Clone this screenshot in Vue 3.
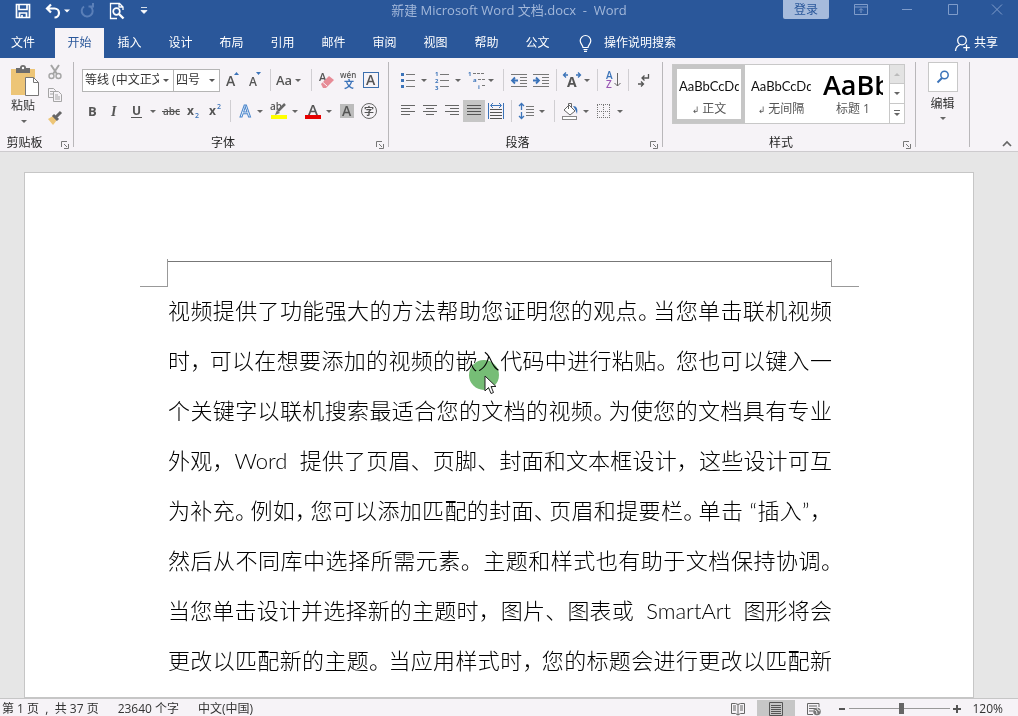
<script setup>
import { ref } from 'vue'

const tabs = ['插入', '设计', '布局', '引用', '邮件', '审阅', '视图', '帮助', '公文']
const zoom = ref(52)

// gap: room left after a punctuation mark (full, mid, slim)
const lines = [
  { gap: 'slim', text: '视频提供了功能强大的方法帮助您证明您的观点。当您单击联机视频' },
  { gap: 'mid', text: '时，可以在想要添加的视频的嵌入代码中进行粘贴。您也可以键入一' },
  { gap: 'slim', text: '个关键字以联机搜索最适合您的文档的视频。为使您的文档具有专业' },
  { gap: 'full', text: '外观，Word\u00a0 提供了页眉、页脚、封面和文本框设计，这些设计可互' },
  { gap: 'slim', end: 'full', text: '为补充。例如，您可以添加匹配的封面、页眉和提要栏。单击 “插入”，' },
  { gap: 'full', end: 'half', text: '然后从不同库中选择所需元素。主题和样式也有助于文档保持协调。' },
  { gap: 'full', text: '当您单击设计并选择新的主题时，图片、图表或\u00a0 SmartArt\u00a0 图形将会' },
  { gap: 'mid', text: '更改以匹配新的主题。当应用样式时，您的标题会进行更改以匹配新' },
].map((l) => ({ ...l, parts: l.text.split(/([。，、])/).filter(Boolean) }))

const isMark = (s) => '。，、'.includes(s)
</script>

<template>
  <div class="app">
    <header class="titlebar">
      <div class="quick">
        <button class="q save" aria-label="保存"><svg width="16" height="16"><path d="M1.500 1.500h13v13h-13z M4 1.500v5h8v-5 M4.500 14.500v-4.500h7v4.500 M7 12v2" fill="none" stroke="#fff" stroke-width="1.700" /></svg></button>
        <button class="q undo" aria-label="撤消"><svg width="26" height="16"><path d="M6 1.500L2 5.500l4 4M2.500 5.500h7a4 4 0 0 1 0 9" fill="none" stroke="#fff" stroke-width="2.200" /><path d="M19 6.500h6l-3 3z" fill="#fff" /></svg></button>
        <button class="q redo" aria-label="重复"><svg width="16" height="16"><path d="M4 3.500a5.500 5.500 0 1 0 7 .5M8.500 3.500h4.500V0" fill="none" stroke="#5a7fb8" stroke-width="2" /></svg></button>
        <button class="q" aria-label="打印预览"><svg width="16" height="18"><path d="M14 8V5l-3.500-3.500H1.500v15H8M10 1.500V5h4" fill="none" stroke="#fff" stroke-width="1.300" /><circle cx="7.500" cy="9.500" r="3.300" fill="none" stroke="#fff" stroke-width="1.700" /><path d="M10 12l4.500 4.500" stroke="#fff" stroke-width="2.400" /></svg></button>
        <button class="q more" aria-label="自定义快速访问工具栏"><svg width="8" height="8"><path d="M1 .5h6M1 3.500h6L4 6.500z" fill="#fff" stroke="#fff" stroke-width=".8" /></svg></button>
      </div>
      <div class="doc-title">新建 Microsoft Word 文档.docx&nbsp; -&nbsp; Word</div>
      <div class="window">
        <button class="login">登录</button>
        <button class="w" aria-label="功能区显示选项"><svg width="14" height="11"><path d="M.5.5h13v10H.5zM.5 3h13M7 9V5M5 6.500L7 4.500l2 2" fill="none" stroke="#7f9cca" /></svg></button>
        <button class="w" aria-label="最小化"><svg width="12" height="11"><path d="M1 5.500h10" stroke="#7f9cca" /></svg></button>
        <button class="w" aria-label="最大化"><svg width="12" height="11"><path d="M1.500.5h9v10h-9z" fill="none" stroke="#7f9cca" /></svg></button>
        <button class="w" aria-label="关闭"><svg width="12" height="11"><path d="M1 .5l10 10M11 .5l-10 10" stroke="#7f9cca" /></svg></button>
      </div>
    </header>

    <nav class="tabs">
      <button class="tab file">文件</button>
      <button class="tab active">开始</button>
      <button v-for="t in tabs" :key="t" class="tab">{{ t }}</button>
      <button class="tell">
        <svg width="13" height="17"><path d="M4 12.500c0-2.500-2.800-3.500-2.800-6.700a5.300 5.300 0 0 1 10.600 0c0 3.200-2.800 4.200-2.800 6.700zM4.500 14.500h4M5 16.300h3" fill="none" stroke="#fff" stroke-width="1.200" /></svg>
        操作说明搜索
      </button>
      <button class="share">
        <svg width="16" height="17"><circle cx="8" cy="5.500" r="4.300" fill="none" stroke="#fff" stroke-width="1.300" /><path d="M1.500 16c.3-3.500 2-5.500 5-6.500M12.500 9.500v6.500M9.300 12.700h6.500" fill="none" stroke="#fff" stroke-width="1.300" /></svg>
        共享
      </button>
    </nav>

    <section class="ribbon">
      <div class="group clip">
        <div class="clip-tools">
          <button class="paste">
            <svg width="30" height="32"><rect x="1" y="4" width="24" height="26" fill="#edc577" /><path d="M6 3h4a3 3 0 0 1 6 0h4v5H6z" fill="#6d6d6d" /><circle cx="13" cy="3" r="1.200" fill="#fff" /><path d="M15.500 12.500h8l5 5v13h-13z" fill="#fff" stroke="#777" /><path d="M23.500 12.500v5h5" fill="none" stroke="#777" /></svg>
            <span>粘贴</span>
            <svg width="8" height="5"><path d="M1 1h6L4 4z" fill="#666" /></svg>
          </button>
          <div class="clip-small">
            <button aria-label="剪切"><svg width="16" height="16"><path d="M4 1l6 9M12 1L6 10" stroke="#a5a5a5" stroke-width="2" /><circle cx="4.500" cy="12" r="2.500" fill="none" stroke="#a5a5a5" stroke-width="1.400" /><circle cx="11.500" cy="12" r="2.500" fill="none" stroke="#a5a5a5" stroke-width="1.400" /></svg></button>
            <button aria-label="复制"><svg width="16" height="16"><path d="M1.500 1.500h5l2 2v7h-7zM3 4.500h4M3 7h4" fill="none" stroke="#a5a5a5" /><path d="M6.500 4.500h5l3 3v7h-8z" fill="#f6f3f7" stroke="#a5a5a5" /><path d="M8 8h3M8 10h5M8 12h5" stroke="#a5a5a5" /></svg></button>
            <button aria-label="格式刷"><svg width="16" height="16"><path d="M1 9l5-3 4 4-4 5z" fill="#edc577" /><path d="M6 5l5 5M9 7l5-5" stroke="#666" stroke-width="3" /></svg></button>
          </div>
        </div>
        <footer>剪贴板<button class="launch" aria-label="剪贴板设置"><svg width="8" height="8"><path d="M.5 6V.5H6M3 3l3 3M7.500 3v4.500H3" fill="none" stroke="#777" /></svg></button></footer>
      </div>

      <div class="group font">
        <div class="row">
          <div class="combo name"><select aria-label="字体"><option>等线 (中文正文)</option></select><svg width="8" height="5"><path d="M1 1h6L4 4z" fill="#555" /></svg></div>
          <div class="combo size"><select aria-label="字号"><option>四号</option></select><svg width="8" height="5"><path d="M1 1h6L4 4z" fill="#555" /></svg></div>
          <button class="b24" aria-label="增大字号"><svg width="24" height="22"><text x="6" y="17" class="g" font-size="14">A</text><path d="M14 6h5l-2.500-3z" fill="#3b73b9" /></svg></button>
          <button class="b22" aria-label="减小字号"><svg width="22" height="22"><text x="5" y="17" class="g" font-size="12">A</text><path d="M12 3h5l-2.500 3z" fill="#3b73b9" /></svg></button>
          <i class="sep"></i>
          <button class="b32" aria-label="更改大小写"><svg width="32" height="22"><text x="1" y="16" class="g" font-size="13">Aa</text><path d="M20 10h6l-3 3z" fill="#666" /></svg></button>
          <i class="sep"></i>
          <button class="b22" aria-label="清除所有格式"><svg width="22" height="22"><text x="3" y="12" class="g" font-size="11">A</text><path d="M5 15l8-8 5 4-8 8h-3z" fill="#e78b96" /><path d="M6.500 13l4.500 4" stroke="#f6f3f7" /></svg></button>
          <button class="b22" aria-label="拼音指南"><svg width="22" height="22"><text x="2" y="9" class="pin">wén</text><text x="6" y="19" class="cj blue" font-size="10">文</text></svg></button>
          <button class="b22" aria-label="字符边框"><svg width="22" height="22"><rect x="3.500" y="3.500" width="15" height="15" fill="none" stroke="#3b6fae" /><text x="6" y="16" class="g" font-size="14">A</text></svg></button>
        </div>
        <div class="row second">
          <button class="b22" aria-label="加粗"><svg width="22" height="22"><text x="7" y="16" class="g bold" font-size="13">B</text></svg></button>
          <button class="b22" aria-label="倾斜"><svg width="22" height="22"><text x="8" y="16" class="ital" font-size="14">I</text></svg></button>
          <button class="b35" aria-label="下划线"><svg width="35" height="22"><text x="7" y="15" class="g bold" font-size="12">U</text><path d="M6 17.500h11" stroke="#555" /><path d="M25 10h6l-3 3z" fill="#666" /></svg></button>
          <button class="b22" aria-label="删除线"><svg width="22" height="22"><text x="3" y="15" class="g" font-size="10">abc</text><path d="M2 11.500h18" stroke="#555" /></svg></button>
          <button class="b22" aria-label="下标"><svg width="22" height="22"><text x="5" y="15" class="g bold" font-size="12">x</text><text x="13" y="18" class="g blue" font-size="7">2</text></svg></button>
          <button class="b22" aria-label="上标"><svg width="22" height="22"><text x="5" y="15" class="g bold" font-size="12">x</text><text x="13" y="9" class="g blue" font-size="7">2</text></svg></button>
          <i class="sep"></i>
          <button class="b31" aria-label="文本效果"><svg width="31" height="22"><text x="5" y="17" class="glow" font-size="16">A</text><path d="M22 10h6l-3 3z" fill="#666" /></svg></button>
          <button class="b35" aria-label="突出显示颜色"><svg width="35" height="22"><text x="4" y="10" class="g" font-size="10">ab</text><path d="M19 4l-7 7" stroke="#666" stroke-width="2.500" /><path d="M9 15l2-5 3 3z" fill="#777" /><rect x="5" y="15" width="16" height="4" fill="#ff0" /><path d="M26 10h6l-3 3z" fill="#666" /></svg></button>
          <button class="b34" aria-label="字体颜色"><svg width="34" height="22"><text x="7" y="15" class="g" font-size="15">A</text><rect x="4" y="15" width="16" height="4" fill="#e60000" /><path d="M25 10h6l-3 3z" fill="#666" /></svg></button>
          <button class="b22" aria-label="字符底纹"><svg width="22" height="22"><rect x="5" y="4" width="14" height="14" fill="#bcbcbc" /><text x="7" y="16" class="g" font-size="14">A</text></svg></button>
          <button class="b22" aria-label="带圈字符"><svg width="22" height="22"><circle cx="12" cy="11" r="7.500" fill="none" stroke="#666" /><text x="7" y="15" class="cj" fill="#555" font-size="10">字</text></svg></button>
        </div>
        <footer>字体<button class="launch" aria-label="字体设置"><svg width="8" height="8"><path d="M.5 6V.5H6M3 3l3 3M7.500 3v4.500H3" fill="none" stroke="#777" /></svg></button></footer>
      </div>

      <div class="group para">
        <div class="row">
          <button class="b34" aria-label="项目符号"><svg width="34" height="22"><path d="M9 5.500h9M9 11.500h9M9 17.500h9" stroke="#777" /><path d="M4 4h3v3H4zM4 10h3v3H4zM4 16h3v3H4z" fill="#3b73b9" /><path d="M24 10h6l-3 3z" fill="#666" /></svg></button>
          <button class="b34" aria-label="编号"><svg width="34" height="22"><path d="M9 5.500h9M9 11.500h9M9 17.500h9" stroke="#777" /><text x="4" y="7" class="n">1</text><text x="4" y="14" class="n">2</text><text x="4" y="21" class="n">3</text><path d="M24 10h6l-3 3z" fill="#666" /></svg></button>
          <button class="b34" aria-label="多级列表"><svg width="34" height="22"><path d="M8 4.500h12M13 10.500h7M17 16.500h4" stroke="#777" stroke-dasharray="3 1" /><text x="3" y="7" class="n">1</text><text x="8" y="13" class="n">a</text><text x="13" y="20" class="n">i</text><path d="M23 10h6l-3 3z" fill="#666" /></svg></button>
          <i class="sep"></i>
          <button class="b22" aria-label="减少缩进量"><svg width="22" height="22"><path d="M3 5.500h16M12 8.500h7M12 11.500h7M12 14.500h7M3 17.500h16" stroke="#777" /><path d="M10 11.500H4M7 8.500l-3 3 3 3" fill="none" stroke="#3b73b9" stroke-width="1.800" /></svg></button>
          <button class="b22" aria-label="增加缩进量"><svg width="22" height="22"><path d="M3 5.500h16M12 8.500h7M12 11.500h7M12 14.500h7M3 17.500h16" stroke="#777" /><path d="M3 11.500h6M6 8.500l3 3-3 3" fill="none" stroke="#3b73b9" stroke-width="1.800" /></svg></button>
          <i class="sep"></i>
          <button class="b32" aria-label="中文版式"><svg width="32" height="22"><text x="6" y="18" class="g bold" font-size="14">A</text><path d="M7 6H3M5 3.500L2.500 6 5 8.500M15 6h4M17 3.500L19.500 6 17 8.500" fill="none" stroke="#3b73b9" stroke-width="1.300" /><path d="M23 10h6l-3 3z" fill="#666" /></svg></button>
          <i class="sep"></i>
          <button class="b22" aria-label="排序"><svg width="22" height="22"><text x="4" y="10" class="g blue" font-size="10">A</text><text x="4" y="19" class="g purple" font-size="10">Z</text><path d="M15.500 4v13M12.500 14l3 3 3-3" fill="none" stroke="#666" /></svg></button>
          <i class="sep"></i>
          <button class="b22" aria-label="显示编辑标记"><svg width="22" height="22"><path d="M15.500 5v4H9M11.500 6.500L9 9l2.500 2.500M5 15h5.500M8 12.500l2.500 2.500L8 17.500" fill="none" stroke="#555" stroke-width="1.300" /></svg></button>
        </div>
        <div class="row second">
          <button class="b22" aria-label="左对齐"><svg width="22" height="22"><path d="M4 5.500h14M4 8.500h9M4 11.500h14M4 14.500h9" stroke="#666" /></svg></button>
          <button class="b22" aria-label="居中"><svg width="22" height="22"><path d="M4 5.500h14M7 8.500h8M4 11.500h14M7 14.500h8" stroke="#666" /></svg></button>
          <button class="b22" aria-label="右对齐"><svg width="22" height="22"><path d="M4 5.500h14M9 8.500h9M4 11.500h14M9 14.500h9" stroke="#666" /></svg></button>
          <button class="b22 on" aria-label="两端对齐"><svg width="22" height="22"><path d="M4 5.500h14M4 8.500h14M4 11.500h14M4 14.500h14" stroke="#555" /></svg></button>
          <button class="b22" aria-label="分散对齐"><svg width="22" height="22"><path d="M3.500 3v16M18.500 3v16M6 5.500h10M8 3L5.500 5.500 8 8M14 3l2.500 2.500L14 8" fill="none" stroke="#3b73b9" /><path d="M5 9.500h12M5 12.500h12M5 15.500h12M5 18.500h12" stroke="#555" /></svg></button>
          <i class="sep"></i>
          <button class="b34" aria-label="行和段落间距"><svg width="34" height="22"><path d="M10 6.500h8M10 9.500h8M10 12.500h8M10 15.500h8" stroke="#777" /><path d="M5.500 4v6M3 6l2.500-2.500L8 6M5.500 12v6M3 16l2.500 2.500L8 16" fill="none" stroke="#3b73b9" stroke-width="1.300" /><path d="M23 10h6l-3 3z" fill="#666" /></svg></button>
          <i class="sep"></i>
          <button class="b34" aria-label="底纹"><svg width="34" height="22"><path d="M5 10l5-5 6 6-5 4z" fill="#fff" stroke="#666" /><path d="M9.500 9V3.500h3V7" fill="none" stroke="#666" /><path d="M14 6c4 0 5 3 4 8-1-3-2-5-4-8z" fill="#3b73b9" /><rect x="3.500" y="16.500" width="14" height="3" fill="#fff" stroke="#888" /><path d="M24 10h6l-3 3z" fill="#666" /></svg></button>
          <button class="b34" aria-label="边框"><svg width="34" height="22"><path d="M4.500 5v13M10.500 5v13M16.500 5v13M4 4.500h13M4 11.500h13M4 17.500h13" stroke="#777" stroke-dasharray="1 1" /><path d="M24 10h6l-3 3z" fill="#666" /></svg></button>
        </div>
        <footer>段落<button class="launch" aria-label="段落设置"><svg width="8" height="8"><path d="M.5 6V.5H6M3 3l3 3M7.500 3v4.500H3" fill="none" stroke="#777" /></svg></button></footer>
      </div>

      <div class="group styles">
        <div class="gallery">
          <button class="style on"><b>AaBbCcDd</b><span><em>↲</em> 正文</span></button>
          <button class="style"><b>AaBbCcDd</b><span><em>↲</em> 无间隔</span></button>
          <button class="style h1"><b>AaBb</b><span>标题 1</span></button>
          <div class="scroll">
            <button class="off" aria-label="上一行"><svg width="8" height="5"><path d="M1 4h6L4 1z" fill="#bbb" /></svg></button>
            <button aria-label="下一行"><svg width="8" height="5"><path d="M1 1h6L4 4z" fill="#666" /></svg></button>
            <button aria-label="其他样式"><svg width="8" height="8"><path d="M1 1.500h6" stroke="#666" /><path d="M1 4h6L4 7z" fill="#666" /></svg></button>
          </div>
        </div>
        <footer>样式<button class="launch" aria-label="样式窗格"><svg width="8" height="8"><path d="M.5 6V.5H6M3 3l3 3M7.500 3v4.500H3" fill="none" stroke="#777" /></svg></button></footer>
      </div>

      <div class="group edit">
        <button class="find">
          <span class="box"><svg width="14" height="14"><circle cx="8.500" cy="5" r="3.700" fill="none" stroke="#3b73b9" stroke-width="1.500" /><path d="M6 8l-4.500 4.500" stroke="#3b73b9" stroke-width="2" /></svg></span>
          <span>编辑</span>
          <svg width="8" height="5"><path d="M1 1h6L4 4z" fill="#666" /></svg>
        </button>
      </div>
      <button class="collapse" aria-label="折叠功能区"><svg width="10" height="7"><path d="M1 6l4-4 4 4" fill="none" stroke="#666" stroke-width="1.700" /></svg></button>
    </section>

    <main class="workspace">
      <article class="page">
        <div class="head"><i class="corner left"></i><i class="corner right"></i></div>
        <p v-for="(l, i) in lines" :key="i" class="line"><template v-for="(p, j) in l.parts" :key="j"><span v-if="isMark(p)" :class="j === l.parts.length - 1 ? l.end : l.gap">{{ p }}</span><template v-else>{{ p }}</template></template></p>
        <div class="pointer">
          <svg width="13" height="20"><path d="M1 1v15l3.500-3.500L7 18.500l2.500-1L7 11.500h5z" fill="#fff" stroke="#222" /></svg>
        </div>
      </article>
    </main>

    <footer class="status">
      <span class="pages">第 1 页&nbsp; ,&nbsp; 共 37 页</span>
      <span class="words">23640 个字</span>
      <span>中文(中国)</span>
      <div class="views">
        <button aria-label="阅读视图"><svg width="14" height="14"><path d="M.5 1.500h4l2.500 1 2.500-1h4v10h-4L7 13l-2.500-1.500h-4zM7 2.500V13M2 4h3M2 6h3M2 8h3M9 4h3M9 6h3M9 8h3" fill="none" stroke="#666" /></svg></button>
        <button class="on" aria-label="页面视图"><svg width="14" height="14"><path d="M.5.5h13v13H.5zM2 3.500h10M2 5.500h10M2 7.500h10M2 9.500h10M2 11.500h10" fill="none" stroke="#555" /></svg></button>
        <button aria-label="Web 版式视图"><svg width="14" height="14"><path d="M12 5V1.500H.5v11H6M2 4h8M2 6.500h6M2 9h4" fill="none" stroke="#666" /><circle cx="10" cy="9.500" r="3.800" fill="#777" /><path d="M7.500 8l2 1 .5 3M10 6l1 2 2 1" fill="none" stroke="#fff" stroke-width=".8" /></svg></button>
      </div>
      <button class="step" aria-label="缩小"><svg width="8" height="8"><path d="M1 4h6" stroke="#555" stroke-width="2" /></svg></button>
      <input v-model="zoom" class="slider" type="range" min="0" max="100" aria-label="显示比例" />
      <button class="step" aria-label="放大"><svg width="8" height="8"><path d="M0 4h8M4 0v8" stroke="#555" stroke-width="2" /></svg></button>
      <span class="percent">120%</span>
    </footer>
  </div>
</template>

<style>
body {
  margin: 0;
}
</style>

<style scoped>
* {
  box-sizing: border-box;
}
.app {
  height: 100vh;
  display: flex;
  flex-direction: column;
  overflow: hidden;
  background: #e6e6e6;
  color: #333;
  font: 12px/16px "Open Sans", "Noto Sans CJK SC", sans-serif;
}
button {
  margin: 0;
  padding: 0;
  border: 0;
  background: none;
  color: inherit;
  font: inherit;
  white-space: nowrap;
}
svg {
  display: block;
  flex: none;
  overflow: visible;
}
.titlebar {
  height: 28px;
  flex: none;
  display: grid;
  grid-template-columns: 1fr auto 1fr;
  background: #2a579a;
  color: #a3b8da;
}
.quick {
  display: flex;
  align-items: center;
  height: 22px;
  padding-left: 15px;
}
.undo {
  margin-left: 14px;
}
.redo {
  margin: 0 13px 0 9px;
}
.more {
  margin-left: 15px;
}
.doc-title {
  font-size: 13px;
  line-height: 20px;
}
.window {
  display: flex;
  align-items: flex-start;
  justify-content: flex-end;
}
.login {
  width: 46px;
  height: 19px;
  margin-right: 9px;
  border-radius: 0 0 2px 2px;
  background: #a6bbdc;
  color: #2a579a;
}
.w {
  width: 46px;
  height: 18px;
  display: flex;
  align-items: center;
  justify-content: center;
}
.w:last-child {
  width: 42px;
}
.tabs {
  height: 30px;
  flex: none;
  display: flex;
  background: #2a579a;
  color: #fff;
}
.tab {
  width: 51px;
  line-height: 28px;
}
.file {
  width: 46px;
  margin-right: 9px;
}
.active {
  width: 49px;
  background: #f6f3f7;
  color: #2a579a;
}
.tell,
.share {
  display: flex;
  align-items: center;
  gap: 12px;
  margin-left: 16px;
}
.share {
  gap: 4px;
  margin: 0 20px 0 auto;
}
.ribbon {
  position: relative;
  height: 94px;
  flex: none;
  display: flex;
  padding: 4px 0;
  border-bottom: 1px solid #cdcbce;
  background: #f6f3f7;
}
.group {
  position: relative;
  flex: none;
  display: flex;
  flex-direction: column;
  border-right: 1px solid #b9b7ba;
}
.clip {
  width: 74px;
}
.font {
  width: 315px;
  padding-left: 8px;
}
.para {
  width: 274px;
  padding-left: 8px;
}
.styles {
  width: 253px;
  padding-left: 9px;
}
.edit {
  width: 54px;
  align-items: center;
}
.group footer {
  position: absolute;
  right: 16px;
  bottom: -4px;
  left: 0;
  text-align: center;
  color: #262626;
}
.clip footer {
  right: 24px;
}
.launch {
  position: absolute;
  right: -12px;
  bottom: 2px;
}
.clip .launch {
  right: -20px;
}
.clip-tools {
  display: flex;
  gap: 7px;
  padding-left: 10px;
}
.paste {
  display: flex;
  flex-direction: column;
  align-items: center;
  width: 30px;
  padding-top: 3px;
}
.paste span {
  padding-right: 4px;
  line-height: 18px;
}
.paste svg:last-child {
  margin: 4px 2px 0 0;
}
.clip-small {
  display: flex;
  flex-direction: column;
  gap: 7px;
  padding-top: 2px;
}
.row {
  height: 24px;
  display: flex;
  align-items: center;
  margin-top: 6px;
}
.second {
  margin-top: 8px;
  height: 22px;
}
.font .second {
  margin-left: -1px;
}
.sep {
  width: 9px;
  height: 22px;
  flex: none;
  border-right: 4px solid #f6f3f7;
  border-left: 4px solid #f6f3f7;
  background: #d0ced2;
}
.b22 {
  width: 22px;
}
.b24 {
  width: 24px;
}
.b31 {
  width: 31px;
}
.b32 {
  width: 32px;
}
.b34 {
  width: 34px;
}
.b35 {
  width: 35px;
}
.on {
  background: #c6c6c6;
}
.combo {
  position: relative;
  height: 23px;
  border: 1px solid #b5b5b5;
  background: #fff;
}
.combo select {
  width: 100%;
  height: 21px;
  padding: 0 14px 0 2px;
  border: 0;
  appearance: none;
  background: transparent;
  color: #333;
  font: inherit;
}
.combo svg {
  position: absolute;
  top: 8px;
  right: 3px;
}
.name {
  width: 92px;
}
.size {
  width: 47px;
  margin-left: -1px;
}
.g {
  fill: #555;
  font-family: "Open Sans", sans-serif;
  font-weight: 600;
}
.bold {
  font-weight: 700;
}
.pin {
  fill: #555;
  font: 600 8px "Open Sans", sans-serif;
}
.ital {
  fill: #555;
  font-family: "Liberation Serif", serif;
  font-style: italic;
  font-weight: 700;
}
.glow {
  fill: #fff;
  stroke: #4a86cc;
  stroke-width: 1px;
  font-family: "Open Sans", sans-serif;
  font-weight: 600;
}
.cj {
  font-family: "Noto Sans CJK SC", sans-serif;
  font-weight: 700;
}
.blue {
  fill: #3b73b9;
}
.purple {
  fill: #9a57b5;
}
.n {
  fill: #3b73b9;
  font: 700 6px "Open Sans", sans-serif;
}
.gallery {
  display: flex;
  width: 233px;
  height: 60px;
  margin-top: 2px;
  border: 1px solid #c8c8c8;
  background: #fff;
}
.style {
  width: 72px;
  display: flex;
  flex-direction: column;
  align-items: center;
  padding: 7px 2px 0;
  border: 4px solid transparent;
  background: #fff;
  color: #555;
}
.style.on {
  border-color: #c6c6c6;
}
.style b {
  width: 60px;
  height: 25px;
  overflow: hidden;
  color: #111;
  font: 13px/20px Lato, sans-serif;
  text-align: left;
}
.style em {
  font: 9px "DejaVu Sans", sans-serif;
}
.style.h1 b {
  color: #000;
  font: 600 27px/18px "Open Sans", sans-serif;
}
.scroll {
  width: 15px;
  margin-left: auto;
  display: grid;
  grid-template-rows: 1fr 1fr 1fr;
  border-left: 1px solid #c8c8c8;
}
.scroll button {
  display: flex;
  align-items: center;
  justify-content: center;
  border-bottom: 1px solid #c8c8c8;
}
.scroll button:last-child {
  border-bottom: 0;
}
.scroll .off {
  background: #e3e3e3;
}
.find {
  display: flex;
  flex-direction: column;
  align-items: center;
}
.box {
  width: 30px;
  height: 30px;
  display: flex;
  align-items: center;
  justify-content: center;
  margin-bottom: 4px;
  border: 1px solid #c8c8c8;
  background: #fff;
}
.find > svg {
  margin-top: 4px;
}
.collapse {
  margin: auto 6px 0 auto;
}
.workspace {
  flex: 1;
  min-height: 0;
  overflow: hidden;
  padding: 20px 44px 0 24px;
}
.page {
  position: relative;
  min-height: 100%;
  padding: 88px 141px 0 143px;
  border: 1px solid #c6c6c6;
  background: #fff;
  color: #111;
}
.head {
  position: relative;
  height: 25px;
  border-top: 1px solid #777;
}
.corner {
  position: absolute;
  top: -3px;
  width: 28px;
  height: 28px;
  border-bottom: 1px solid #999;
}
.left {
  right: 100%;
  border-right: 1px solid #999;
}
.right {
  left: 100%;
  margin-left: -1px;
  border-left: 1px solid #999;
}
.line {
  margin: 0;
  color: #000;
  font: 300 22px/50px Lato, "Noto Sans CJK SC", sans-serif;
  text-align: justify;
  text-align-last: justify;
}
.half,
.slim,
.mid {
  font-feature-settings: "halt";
}
.slim {
  padding-right: 4px;
}
.mid {
  padding-right: 8px;
}
.pointer {
  position: absolute;
  top: 187px;
  left: 444px;
  width: 30px;
  height: 30px;
  padding: 15px 0 0 15px;
}
.pointer::before {
  content: "";
  position: absolute;
  inset: 0;
  border-radius: 50%;
  background: #76bd76;
  mix-blend-mode: multiply;
}
.pointer svg {
  position: relative;
}
.status {
  height: 18px;
  flex: none;
  display: flex;
  align-items: center;
  padding: 2px 15px 0 2px;
  border-top: 1px solid #c6c6c6;
  background: #f6f3f7;
  line-height: 18px;
  white-space: nowrap;
}
.status span {
  margin-right: 19px;
}
.views {
  display: flex;
  margin-left: auto;
}
.views button {
  width: 38px;
  height: 18px;
  display: flex;
  align-items: center;
  justify-content: center;
}
.step {
  margin-left: 5px;
}
.slider {
  width: 101px;
  height: 12px;
  margin: 0 -2px 0 3px;
  appearance: none;
  background: linear-gradient(#999, #999) center / 100% 1px no-repeat;
}
.slider::-webkit-slider-thumb {
  appearance: none;
  width: 5px;
  height: 11px;
  background: #666;
}
.status .percent {
  margin: 0 0 0 11px;
}
</style>
